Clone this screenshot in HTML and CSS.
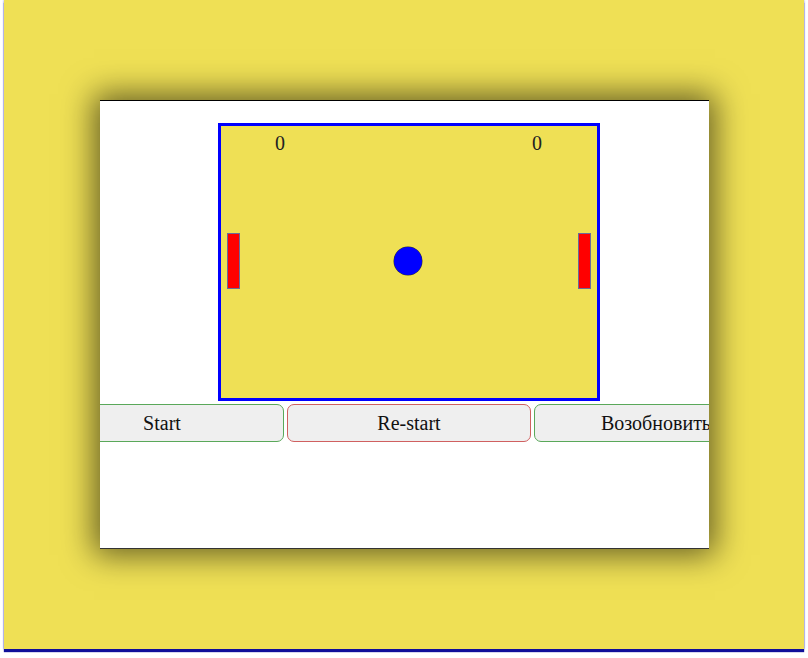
FILE: index.html
```html
<!DOCTYPE html>
<html>
<head>
<meta charset="utf-8">
<link rel="stylesheet" href="styles.css">
</head>
<body>
<div class="page">
  <div class="stage">
    <div class="board">
      <span class="score score-left">0</span>
      <span class="score score-right">0</span>
      <div class="paddle paddle-left"></div>
      <div class="paddle paddle-right"></div>
      <div class="ball"></div>
    </div>
    <div class="controls">
      <button class="btn btn-green">Start</button>
      <button class="btn btn-red">Re-start</button>
      <button class="btn btn-green">Возобновить</button>
    </div>
  </div>
</div>
</body>
</html>
```

FILE: styles.css
```css
html, body {
  margin: 0;
  padding: 0;
  background: #ffffff;
}
body {
  height: 658px;
  box-sizing: border-box;
  padding-bottom: 9px;
  overflow: hidden;
}
.page {
  margin: 0 4px;
  height: 649px;
  background: #efe055;
  box-shadow: 0 3px 1px #10109a, 0 0 2px #8080e0;
  padding-top: 100px;
  box-sizing: border-box;
}
.stage {
  margin-left: 96px;
  width: 609px;
  height: 449px;
  background: #ffffff;
  border-top: 1px solid #000;
  border-bottom: 1px solid #333;
  box-sizing: border-box;
  box-shadow: 0 0 30px 6px rgba(0, 0, 0, 0.58);
  overflow: hidden;
  display: flex;
  flex-direction: column;
  align-items: center;
  padding-top: 22px;
}
.board {
  position: relative;
  width: 376px;
  height: 272px;
  margin-left: 9px;
  background: #efe055;
  border: 3px solid #0000ff;
  flex: none;
}
.score {
  position: absolute;
  top: 6px;
  font-family: "Liberation Serif", serif;
  font-size: 20px;
  color: #222;
}
.score-left { left: 54px; }
.score-right { left: 311px; }
.paddle {
  position: absolute;
  top: 107px;
  width: 11px;
  height: 54px;
  background: #ff0000;
  border: 1px solid #6a6a9a;
}
.paddle-left { left: 6px; }
.paddle-right { left: 357px; }
.ball {
  position: absolute;
  left: 173px;
  top: 121px;
  width: 28px;
  height: 28px;
  border-radius: 50%;
  background: #0000ff;
  box-shadow: 0 0 0 0.5px #333;
}
.controls {
  display: flex;
  gap: 3px;
  margin-top: 3px;
  margin-left: 9px;
  flex: none;
}
.btn {
  flex: none;
  width: 244px;
  height: 38px;
  background: #efefef;
  border-radius: 7px;
  font-family: "Liberation Serif", serif;
  font-size: 20px;
  color: #111;
  padding: 0;
}
.btn-green { border: 1px solid #5aa85a; }
.btn-red { border: 1px solid #d06060; }
```
